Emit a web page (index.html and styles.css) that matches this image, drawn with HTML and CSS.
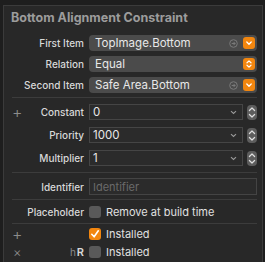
FILE: index.html
```html
<!DOCTYPE html>
<html>
<head>
<meta charset="utf-8">
<link rel="stylesheet" href="styles.css">
</head>
<body>
<div class="panel">
  <div class="title">Bottom Alignment Constraint</div>

  <div class="group first">
    <div class="row">
      <div class="label">First Item</div>
      <div class="popup">
        <span class="ptext">TopImage.Bottom</span>
        <svg class="goto" width="9" height="9" viewBox="0 0 9 9"><circle cx="4.5" cy="4.5" r="3.8" fill="none" stroke="#7a7a7a" stroke-width="1"/><path d="M2.7 4.5h3.4M4.6 3l1.5 1.5-1.5 1.5" fill="none" stroke="#7a7a7a" stroke-width="1"/></svg>
        <span class="obtn"><svg width="12" height="12" viewBox="0 0 12 12"><path d="M3.8 5l2.2 2.2L8.2 5" fill="none" stroke="#fff" stroke-width="1.3" stroke-linecap="round" stroke-linejoin="round"/></svg></span>
      </div>
    </div>
    <div class="row">
      <div class="label">Relation</div>
      <div class="popup">
        <span class="ptext">Equal</span>
        <span class="obtn"><svg width="12" height="12" viewBox="0 0 12 12"><path d="M4 4.8L6 2.9l2 1.9M4 7.2L6 9.1l2-1.9" fill="none" stroke="#fff" stroke-width="1.2" stroke-linecap="round" stroke-linejoin="round"/></svg></span>
      </div>
    </div>
    <div class="row">
      <div class="label">Second Item</div>
      <div class="popup">
        <span class="ptext">Safe Area.Bottom</span>
        <svg class="goto" width="9" height="9" viewBox="0 0 9 9"><circle cx="4.5" cy="4.5" r="3.8" fill="none" stroke="#7a7a7a" stroke-width="1"/><path d="M2.7 4.5h3.4M4.6 3l1.5 1.5-1.5 1.5" fill="none" stroke="#7a7a7a" stroke-width="1"/></svg>
        <span class="obtn"><svg width="12" height="12" viewBox="0 0 12 12"><path d="M3.8 5l2.2 2.2L8.2 5" fill="none" stroke="#fff" stroke-width="1.3" stroke-linecap="round" stroke-linejoin="round"/></svg></span>
      </div>
    </div>
  </div>

  <div class="group nums">
    <div class="row">
      <div class="label"><span class="mark">+</span>Constant</div>
      <div class="combo-wrap">
        <div class="combo"><span class="ctext">0</span><svg width="7" height="5" viewBox="0 0 7 5"><path d="M1 1.2l2.5 2.3L6 1.2" fill="none" stroke="#9a9a9a" stroke-width="1.1"/></svg></div>
        <div class="stepper"><svg width="10" height="15" viewBox="0 0 10 15"><path d="M2.4 5.5L5 3l2.6 2.5M2.4 9.5L5 12l2.6-2.5" fill="none" stroke="#e0e0e0" stroke-width="1.2" stroke-linecap="round" stroke-linejoin="round"/></svg></div>
      </div>
    </div>
    <div class="row">
      <div class="label">Priority</div>
      <div class="combo-wrap">
        <div class="combo"><span class="ctext">1000</span><svg width="7" height="5" viewBox="0 0 7 5"><path d="M1 1.2l2.5 2.3L6 1.2" fill="none" stroke="#9a9a9a" stroke-width="1.1"/></svg></div>
        <div class="stepper"><svg width="10" height="15" viewBox="0 0 10 15"><path d="M2.4 5.5L5 3l2.6 2.5M2.4 9.5L5 12l2.6-2.5" fill="none" stroke="#e0e0e0" stroke-width="1.2" stroke-linecap="round" stroke-linejoin="round"/></svg></div>
      </div>
    </div>
    <div class="row">
      <div class="label">Multiplier</div>
      <div class="combo-wrap">
        <div class="combo"><span class="ctext">1</span><svg width="7" height="5" viewBox="0 0 7 5"><path d="M1 1.2l2.5 2.3L6 1.2" fill="none" stroke="#9a9a9a" stroke-width="1.1"/></svg></div>
        <div class="stepper"><svg width="10" height="15" viewBox="0 0 10 15"><path d="M2.4 5.5L5 3l2.6 2.5M2.4 9.5L5 12l2.6-2.5" fill="none" stroke="#e0e0e0" stroke-width="1.2" stroke-linecap="round" stroke-linejoin="round"/></svg></div>
      </div>
    </div>
  </div>

  <div class="group ident">
    <div class="row tall">
      <div class="label">Identifier</div>
      <div class="textfield">Identifier</div>
    </div>
  </div>

  <div class="group place">
    <div class="row">
      <div class="label">Placeholder</div>
      <div class="check"><span class="box"></span>Remove at build time</div>
    </div>
  </div>

  <div class="group inst">
    <div class="row">
      <div class="label"><span class="mark">+</span></div>
      <div class="check"><span class="box on"><svg width="12" height="12" viewBox="0 0 12 12"><path d="M2.8 6.3l2.3 2.5 4.2-6" fill="none" stroke="#fff" stroke-width="1.6" stroke-linecap="round" stroke-linejoin="round"/></svg></span>Installed</div>
    </div>
    <div class="row">
      <div class="label"><span class="mark x">×</span><span class="size"><span class="h">h</span>R</span></div>
      <div class="check"><span class="box"></span>Installed</div>
    </div>
  </div>
</div>
</body>
</html>
```

FILE: styles.css
```css
html, body {
  margin: 0;
  padding: 0;
  background: #1e1e1e;
  width: 265px;
  height: 262px;
  overflow: hidden;
}

.panel {
  box-sizing: border-box;
  margin-left: 3px;
  width: 260px;
  height: 257px;
  margin-top: 5px;
  border-left: 1px solid #3b3b3b;
  border-top: 1px solid #3b3b3b;
  border-right: 1px solid #3b3b3b;
  background: #282828;
  font-family: Inter, "Liberation Sans", sans-serif;
  font-size: 10px;
  color: #d8d8d8;
}

.title {
  box-sizing: border-box;
  padding: 4px 0 0 7px;
  height: 25px;
  font-weight: 700;
  font-size: 12.5px;
  color: #9c9c9c;
  line-height: 15px;
}

.group {
  margin: 0 5px 0 8px;
  border-bottom: 1px solid #3c3c3c;
  display: flex;
  flex-direction: column;
}

.first { gap: 5px; padding: 4px 0 4px; }
.nums { gap: 7px; padding: 6px 0 6px; }
.ident { padding: 5px 0 4px; }
.place { padding: 4px 0 3px; }
.inst { border-bottom: none; gap: 2px; padding: 2px 0 0; }

.row {
  display: grid;
  grid-template-columns: 72px 1fr;
  column-gap: 5px;
  align-items: center;
  height: 16px;
}
.row.tall { height: 17px; }

.label {
  display: flex;
  justify-content: flex-end;
  align-items: center;
  white-space: nowrap;
  font-weight: 500;
  line-height: 16px;
}

.mark {
  margin-right: auto;
  color: #8c8c8c;
  font-size: 16px;
  font-weight: 300;
  padding-left: 0;
}
.mark.x { font-size: 13px; padding-left: 1px; }

.size { color: #d8d8d8; font-weight: 600; font-size: 11px; }
.size .h { color: #8c8c8c; font-weight: 400; font-size: 10px; margin-right: 1px; }

.popup {
  height: 16px;
  background: #4b4b4b;
  border-radius: 4px;
  display: flex;
  align-items: center;
  padding: 0 2px 0 6px;
  color: #e8e8e8;
  font-size: 11.5px;
}
.ptext { flex: 1; }
.goto { margin-right: 5px; }
.obtn {
  width: 12px;
  height: 12px;
  background: #f2860f;
  border-radius: 3px;
  display: flex;
}

.combo-wrap {
  display: flex;
  align-items: center;
  gap: 4px;
}
.combo {
  flex: 1;
  height: 14px;
  border: 1px solid #454545;
  background: #2b2b2b;
  display: flex;
  align-items: center;
  padding: 0 5px 0 3px;
  color: #e8e8e8;
  font-size: 11.5px;
}
.ctext { flex: 1; }
.stepper {
  width: 10px;
  height: 15px;
  background: #5d5d5d;
  border-radius: 4px;
  display: flex;
}

.textfield {
  box-sizing: border-box;
  height: 17px;
  border: 1px solid #444;
  background: #2b2b2b;
  color: #6a6a6a;
  font-size: 11px;
  padding-left: 3px;
  display: flex;
  align-items: center;
}

.check {
  display: flex;
  align-items: center;
  gap: 5px;
  font-size: 11px;
  color: #e0e0e0;
}
.box {
  width: 12px;
  height: 12px;
  border-radius: 3px;
  background: #595959;
  display: flex;
}
.box.on { background: #f2860f; }
```
